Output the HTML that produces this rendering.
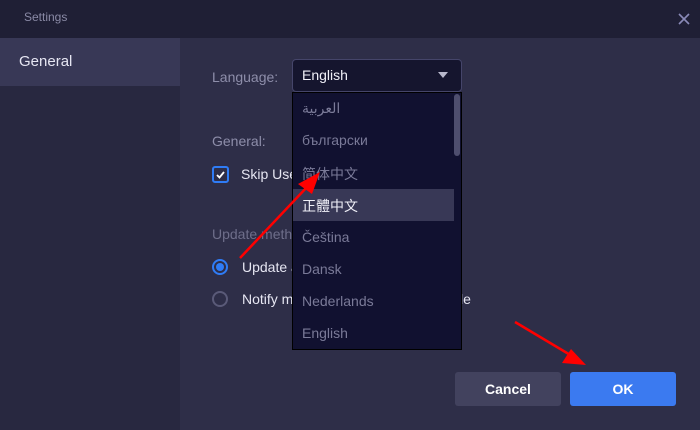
<!DOCTYPE html>
<html><head><style>
*{margin:0;padding:0;box-sizing:border-box}
body{width:700px;height:430px;overflow:hidden;background:#2e2e48;font-family:"Liberation Sans","Noto Sans CJK SC",sans-serif;position:relative}
.t{position:absolute;white-space:nowrap}
</style></head><body>
<div style="position:absolute;left:0;top:0;width:700px;height:38px;background:#1f1f35"></div>
<div class="t" style="left:24px;top:10px;font-size:12px;color:#8a8aa6">Settings</div>
<svg style="position:absolute;left:678px;top:13px" width="12" height="12"><path d="M1 1L11 11M11 1L1 11" stroke="#8a8ab8" stroke-width="1.6"/></svg>
<div style="position:absolute;left:0;top:38px;width:180px;height:392px;background:#282840"></div>
<div style="position:absolute;left:0;top:38px;width:180px;height:48px;background:#383856"></div>
<div class="t" style="left:19px;top:53px;font-size:15px;color:#e6e6f2">General</div>
<div class="t" style="left:212px;top:69px;font-size:14px;color:#8e8eaa">Language:</div>
<div style="position:absolute;left:292px;top:59px;width:170px;height:33px;background:#15152e;border:1px solid #45456a;border-radius:4px"></div>
<div class="t" style="left:302px;top:67px;font-size:14px;color:#f0f0f8">English</div>
<svg style="position:absolute;left:437px;top:71px" width="12" height="8"><path d="M1 1H11L6 7Z" fill="#b8b8cc"/></svg>
<div class="t" style="left:212px;top:133px;font-size:14px;color:#8e8eaa">General:</div>
<div style="position:absolute;left:212px;top:166px;width:17px;height:17px;border:2px solid #2f7cf6;border-radius:3px"></div>
<svg style="position:absolute;left:212px;top:166px" width="17" height="17"><path d="M5 9L7.5 11.5L12 6" stroke="#fff" stroke-width="1.8" fill="none"/></svg>
<div class="t" style="left:241px;top:166px;font-size:14px;color:#e6e6f2">Skip User</div>
<div class="t" style="left:212px;top:226px;font-size:14px;color:#6e6e8a">Update method</div>
<div style="position:absolute;left:212px;top:259px;width:16px;height:16px;border:2px solid #2f7cf6;border-radius:50%"></div>
<div style="position:absolute;left:216px;top:263px;width:8px;height:8px;background:#2f7cf6;border-radius:50%"></div>
<div class="t" style="left:242px;top:259px;font-size:14px;color:#e6e6f2">Update a</div>
<div style="position:absolute;left:212px;top:291px;width:16px;height:16px;border:2px solid #5a5a78;border-radius:50%"></div>
<div class="t" style="left:242px;top:291px;font-size:14px;color:#e6e6f2">Notify me</div>
<div class="t" style="left:460px;top:291px;font-size:14px;color:#e6e6f2">le</div>
<div style="position:absolute;left:292px;top:92px;width:170px;height:258px;background:#111130;border:1px solid #000"></div>
<div style="position:absolute;left:293px;top:189px;width:161px;height:32px;background:#383856"></div>
<div style="position:absolute;left:454px;top:94px;width:6px;height:62px;background:#4e4e6e;border-radius:3px"></div>
<div class="t" style="left:302px;top:100px;font-size:14px;color:#7a7a98">العربية</div>
<div class="t" style="left:302px;top:132px;font-size:14px;color:#7a7a98">български</div>
<div class="t" style="left:302px;top:164px;font-size:14px;color:#7a7a98">简体中文</div>
<div class="t" style="left:302px;top:196px;font-size:14px;color:#f0f0f8">正體中文</div>
<div class="t" style="left:302px;top:229px;font-size:14px;color:#7a7a98">Čeština</div>
<div class="t" style="left:302px;top:261px;font-size:14px;color:#7a7a98">Dansk</div>
<div class="t" style="left:302px;top:293px;font-size:14px;color:#7a7a98">Nederlands</div>
<div class="t" style="left:302px;top:325px;font-size:14px;color:#7a7a98">English</div>
<div style="position:absolute;left:455px;top:372px;width:106px;height:34px;background:#42425e;border-radius:3px;color:#fff;font-weight:bold;font-size:14px;text-align:center;line-height:34px">Cancel</div>
<div style="position:absolute;left:570px;top:372px;width:106px;height:34px;background:#3b7af0;border-radius:3px;color:#fff;font-weight:bold;font-size:14px;text-align:center;line-height:34px">OK</div>
<svg style="position:absolute;left:0;top:0" width="700" height="430">
<path d="M240 258L308 186" stroke="#f00" stroke-width="2.5"/><path d="M320 172L298 184L312 194Z" fill="#f00"/>
<path d="M515 322L572 356" stroke="#f00" stroke-width="2.5"/><path d="M586 365L562 363L571 349Z" fill="#f00"/>
</svg>
</body></html>
